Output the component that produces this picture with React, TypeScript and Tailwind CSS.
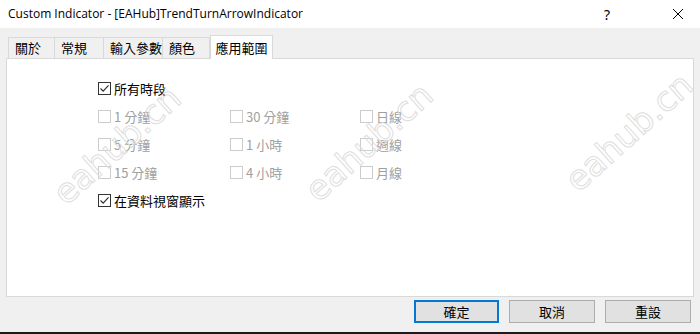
import React from "react";

const CJK = { fontFamily: '"Noto Sans CJK TC", "Noto Sans", sans-serif' };

function Box({ checked, disabled }: { checked?: boolean; disabled?: boolean }) {
  return (
    <span
      className={`w-[13px] h-[13px] border bg-white flex items-center justify-center shrink-0 ${
        disabled ? "border-[#cccccc]" : "border-[#333333]"
      }`}
    >
      {checked && (
        <svg width="11" height="11" viewBox="0 0 11 11">
          <path d="M1.5 5.5 L4.2 8.2 L9.5 2.3" fill="none" stroke="#333" strokeWidth="1.2" />
        </svg>
      )}
    </span>
  );
}

function Check({ label, checked, disabled }: { label: string; checked?: boolean; disabled?: boolean }) {
  return (
    <div className="flex items-center gap-[3px] h-[28px]">
      <Box checked={checked} disabled={disabled} />
      <span className={`text-[13px] leading-none ${disabled ? "text-[#a0a0a0]" : "text-black"}`}>{label}</span>
    </div>
  );
}

function Watermark({ x, y }: { x: number; y: number }) {
  return (
    <div
      className="absolute pointer-events-none text-[34px] text-transparent [-webkit-text-stroke:1px_#dedede] rotate-[-42deg] whitespace-nowrap leading-none"
      style={{ left: x, top: y, fontFamily: '"DejaVu Sans", sans-serif' }}
    >
      eahub.cn
    </div>
  );
}

export default function App() {
  const tabs = [
    { label: "關於", w: 47 },
    { label: "常規", w: 49 },
    { label: "輸入參數", w: 59 },
    { label: "顏色", w: 47 },
  ];
  return (
    <div className="relative w-[700px] h-[334px] bg-[#f0f0f0] overflow-hidden flex flex-col" style={CJK}>
      <div className="h-[28px] bg-white flex items-center shrink-0">
        <span className="pl-[8px] text-[12px] text-black" style={{ fontFamily: '"Open Sans", "Noto Sans", sans-serif' }}>
          Custom Indicator - [EAHub]TrendTurnArrowIndicator
        </span>
        <span className="ml-auto mr-[62px] text-[14px] text-black" style={{ fontFamily: '"Noto Sans", sans-serif' }}>?</span>
        <svg width="12" height="12" viewBox="0 0 12 12" className="mr-[16px]">
          <path d="M1 1 L11 11 M11 1 L1 11" stroke="#000" strokeWidth="1" />
        </svg>
      </div>
      <div className="flex items-end pl-[8px] h-[30px] shrink-0">
        {tabs.map((t, i) => (
          <div
            key={t.label}
            className={`h-[21px] border-t border-[#d9d9d9] bg-[#f0f0f0] flex items-center pl-[6px] text-[13px] text-black ${
              i === 0 ? "border-l" : ""
            } border-r`}
            style={{ width: t.w }}
          >
            {t.label}
          </div>
        ))}
        <div className="h-[24px] w-[63px] -mb-px relative z-10 border border-b-0 border-[#d9d9d9] bg-white flex items-start pt-[2px] justify-center text-[13px] text-black">
          應用範圍
        </div>
      </div>
      <div className="mx-[6px] h-[239px] bg-white border border-[#d9d9d9] shrink-0 pl-[91px] pt-[15px]">
        <Check label="所有時段" checked />
        <div className="grid grid-cols-[132px_130px_100px]">
          <Check label="1 分鐘" disabled />
          <Check label="30 分鐘" disabled />
          <Check label="日線" disabled />
          <Check label="5 分鐘" disabled />
          <Check label="1 小時" disabled />
          <Check label="週線" disabled />
          <Check label="15 分鐘" disabled />
          <Check label="4 小時" disabled />
          <Check label="月線" disabled />
        </div>
        <Check label="在資料視窗顯示" checked />
      </div>
      <div className="flex justify-end gap-[10px] pr-[9px] pt-[3px] shrink-0">
        <button className="w-[85px] h-[23px] bg-[#e1e1e1] border-2 border-[#0078d7] text-[13px] text-black flex items-center justify-center">
          確定
        </button>
        <button className="w-[86px] h-[23px] bg-[#e1e1e1] border border-[#adadad] text-[13px] text-black flex items-center justify-center">
          取消
        </button>
        <button className="w-[86px] h-[23px] bg-[#e1e1e1] border border-[#adadad] text-[13px] text-black flex items-center justify-center">
          重設
        </button>
      </div>
      <div className="mt-auto h-[2px] bg-[#1a1a1a] shrink-0" />
      <Watermark x={38} y={128} />
      <Watermark x={290} y={125} />
      <Watermark x={550} y={115} />
    </div>
  );
}
